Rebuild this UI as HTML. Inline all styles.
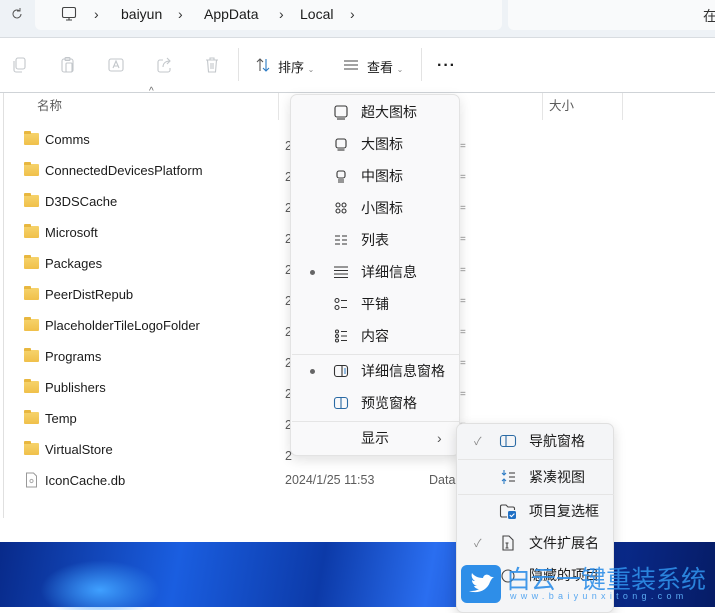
<!DOCTYPE html>
<html><head><meta charset="utf-8"><style>
*{margin:0;padding:0;box-sizing:border-box}
body{width:715px;height:607px;overflow:hidden;position:relative;font-family:"Liberation Sans","Noto Sans CJK SC",sans-serif;font-size:13px;color:#1b1b1b;background:#fff}
.abs{position:absolute}
.top{left:0;top:0;width:715px;height:38px;background:#eef2f6;border-bottom:1px solid #d8dce0}
.addr{left:35px;top:0;width:467px;height:30px;background:#f9fafb;border-radius:0 0 6px 6px}
.addr2{left:508px;top:0;width:220px;height:30px;background:#f9fafb;border-radius:0 0 6px 6px}
.tb{left:0;top:38px;width:715px;height:55px;background:#fff;border-bottom:1px solid #cfd3d7}
.hdr{top:93px;height:27px;font-size:12.5px;color:#5c5c5c}
.row{left:24px;height:20px;font-size:13px;color:#1b1b1b;display:flex;align-items:center}
.fold{width:15px;height:12px;background:linear-gradient(#f6d36b,#f0c04a);border-radius:1px;margin-right:6px;position:relative;top:0}
.fold:before{content:"";position:absolute;left:0;top:-2px;width:7px;height:3px;background:#e8b73f;border-radius:1px 1px 0 0}
.menu{left:290px;top:94px;width:170px;height:362px;background:#f9f9fa;border:1px solid #e3e3e3;border-radius:7px;box-shadow:0 4px 12px rgba(0,0,0,.12)}
.mi{position:absolute;left:0;width:170px;height:30px;display:flex;align-items:center;font-size:14px}
.mi svg{position:absolute;left:42px}
.mi span{position:absolute;left:70px}
.dot{position:absolute;left:19px;width:5px;height:5px;border-radius:50%;background:#666}
.sep{position:absolute;left:1px;width:168px;height:1px;background:#e5e5e5}
.sub{left:456px;top:423px;width:158px;height:190px;background:#f4f5f7;border:1px solid #e0e0e0;border-radius:7px;box-shadow:0 4px 12px rgba(0,0,0,.15)}
.si{position:absolute;left:0;width:158px;height:28px;display:flex;align-items:center;font-size:14px}
.si span{position:absolute;left:72px}
.si svg{position:absolute;left:42px}
.chk{position:absolute;left:17px;color:#888;font-size:11px}
</style></head><body>
<div class="abs top"></div>
<div class="abs addr"></div>
<div class="abs addr2"></div>
<svg class="abs" style="left:10px;top:7px" width="14" height="14" viewBox="0 0 14 14"><path d="M11 7a4 4 0 1 1-1.3-3" fill="none" stroke="#555" stroke-width="1"/><path d="M10 1v3H7" fill="none" stroke="#555" stroke-width="1"/></svg>
<svg class="abs" style="left:61px;top:6px" width="16" height="16" viewBox="0 0 16 16"><rect x="1.5" y="1.5" width="13" height="10" rx="1.5" fill="none" stroke="#444" stroke-width="1.1"/><path d="M5 14h6M8 11.5v2.5" stroke="#444" stroke-width="1.1"/></svg>
<div class="abs" style="left:94px;top:6px;font-size:14px;color:#333">›</div>
<div class="abs" style="left:121px;top:6px;font-size:14px;color:#1b1b1b">baiyun</div>
<div class="abs" style="left:178px;top:6px;font-size:14px;color:#333">›</div>
<div class="abs" style="left:204px;top:6px;font-size:14px;color:#1b1b1b">AppData</div>
<div class="abs" style="left:279px;top:6px;font-size:14px;color:#333">›</div>
<div class="abs" style="left:300px;top:6px;font-size:14px;color:#1b1b1b">Local</div>
<div class="abs" style="left:350px;top:6px;font-size:14px;color:#333">›</div>
<div class="abs" style="left:703px;top:6px;font-size:14px;color:#333">在</div>

<div class="abs tb"></div>
<svg class="abs" style="left:10px;top:56px" width="18" height="18" viewBox="0 0 18 18" fill="none" stroke="#c3c7cb" stroke-width="1.1"><rect x="6" y="2" width="9" height="11" rx="2"/><path d="M4 5v9a2 2 0 0 0 2 2h6"/></svg>
<svg class="abs" style="left:59px;top:56px" width="18" height="18" viewBox="0 0 18 18" fill="none" stroke="#c3c7cb" stroke-width="1.1"><rect x="3" y="3" width="11" height="13" rx="2"/><rect x="6" y="1.5" width="5" height="3" rx="1"/><rect x="7" y="7" width="6" height="9" rx="1"/></svg>
<svg class="abs" style="left:107px;top:56px" width="18" height="18" viewBox="0 0 18 18" fill="none" stroke="#c3c7cb" stroke-width="1.1"><rect x="2" y="3" width="14" height="12" rx="2"/><path d="M6 12l3-7 3 7M7 10h4"/></svg>
<svg class="abs" style="left:156px;top:56px" width="18" height="18" viewBox="0 0 18 18" fill="none" stroke="#c3c7cb" stroke-width="1.1"><path d="M7 4H4a2 2 0 0 0-2 2v8a2 2 0 0 0 2 2h8a2 2 0 0 0 2-2v-2"/><path d="M7 11c0-4 3-6 7-6M11 2l3 3-3 3"/></svg>
<svg class="abs" style="left:203px;top:56px" width="18" height="18" viewBox="0 0 18 18" fill="none" stroke="#c3c7cb" stroke-width="1.1"><path d="M3 4h12M7 4V2h4v2M4.5 4l1 12h7l1-12M8 7v6M10 7v6"/></svg>
<div class="abs" style="left:238px;top:48px;width:1px;height:33px;background:#e3e3e3"></div>
<svg class="abs" style="left:255px;top:57px" width="16" height="16" viewBox="0 0 16 16" fill="none" stroke-width="1.1"><path d="M5 14V2M2 5l3-3 3 3" stroke="#555"/><path d="M11 2v12M8 11l3 3 3-3" stroke="#2a7ac4"/></svg>
<div class="abs" style="left:278px;top:57px;font-size:13px">排序 <span style="font-size:8px;color:#888">⌄</span></div>
<svg class="abs" style="left:343px;top:58px" width="16" height="14" viewBox="0 0 16 14" stroke="#444" stroke-width="1.1"><path d="M1 3h14M1 7h14M1 11h14"/></svg>
<div class="abs" style="left:367px;top:57px;font-size:13px">查看 <span style="font-size:8px;color:#888">⌄</span></div>
<div class="abs" style="left:421px;top:48px;width:1px;height:33px;background:#e3e3e3"></div>
<div class="abs" style="left:437px;top:57px;font-size:16px;letter-spacing:1px;font-weight:bold">···</div>

<div class="abs" style="left:3px;top:93px;width:1px;height:425px;background:#e0e0e0"></div>
<div class="abs hdr" style="left:37px;line-height:27px">名称</div>
<div class="abs" style="left:149px;top:86px;font-size:10px;color:#666">^</div>
<div class="abs" style="left:278px;top:93px;width:1px;height:27px;background:#e5e5e5"></div>
<div class="abs" style="left:542px;top:93px;width:1px;height:27px;background:#e5e5e5"></div>
<div class="abs" style="left:622px;top:93px;width:1px;height:27px;background:#e5e5e5"></div>
<div class="abs hdr" style="left:549px;line-height:27px">大小</div>

<div class="abs row" style="top:129px"><div class="fold"></div>Comms</div>
<div class="abs row" style="top:160px"><div class="fold"></div>ConnectedDevicesPlatform</div>
<div class="abs row" style="top:191px"><div class="fold"></div>D3DSCache</div>
<div class="abs row" style="top:222px"><div class="fold"></div>Microsoft</div>
<div class="abs row" style="top:253px"><div class="fold"></div>Packages</div>
<div class="abs row" style="top:284px"><div class="fold"></div>PeerDistRepub</div>
<div class="abs row" style="top:315px"><div class="fold"></div>PlaceholderTileLogoFolder</div>
<div class="abs row" style="top:346px"><div class="fold"></div>Programs</div>
<div class="abs row" style="top:377px"><div class="fold"></div>Publishers</div>
<div class="abs row" style="top:408px"><div class="fold"></div>Temp</div>
<div class="abs row" style="top:439px"><div class="fold"></div>VirtualStore</div>
<div class="abs row" style="top:470px"><svg width="15" height="16" viewBox="0 0 15 16" style="margin-right:6px"><path d="M2.5 1h7l3 3v11h-10z" fill="#fff" stroke="#999"/><circle cx="7.5" cy="9" r="1.6" fill="none" stroke="#aaa"/></svg>IconCache.db</div>
<div class="abs" style="left:285px;top:473px;font-size:12.5px;color:#5c5c5c">2024/1/25 11:53</div>
<div class="abs" style="left:429px;top:473px;font-size:12.5px;color:#5c5c5c">Data</div>
<div class="abs" style="left:285px;top:131px;font-size:12.5px;color:#5c5c5c;line-height:31px">2<br>2<br>2<br>2<br>2<br>2<br>2<br>2<br>2<br>2<br>2</div>
<div class="abs" style="left:460px;top:131px;font-size:10px;color:#888;line-height:31px">=<br>=<br>=<br>=<br>=<br>=<br>=<br>=<br>=<br>=</div>

<div class="abs" style="left:0;top:542px;width:715px;height:65px;background:linear-gradient(100deg,#082a8a 0%,#1a5ee0 25%,#0c3aa8 45%,#2a6ef0 60%,#0a2e96 80%,#061c66 100%)"></div>
<div class="abs" style="left:40px;top:560px;width:120px;height:50px;background:radial-gradient(ellipse at 50% 60%,#3fa0ff,transparent 70%)"></div>

<div class="abs menu">
<div class="mi" style="top:2px"><svg width="16" height="16" viewBox="0 0 16 16" fill="none" stroke="#333" stroke-width="1.1"><rect x="2" y="2" width="12" height="11" rx="2"/><path d="M4 15h8"/></svg><span>超大图标</span></div>
<div class="mi" style="top:34px"><svg width="16" height="16" viewBox="0 0 16 16" fill="none" stroke="#333" stroke-width="1.1"><rect x="3" y="3" width="10" height="9" rx="2"/><path d="M4.5 14h7"/></svg><span>大图标</span></div>
<div class="mi" style="top:66px"><svg width="16" height="16" viewBox="0 0 16 16" fill="none" stroke="#333" stroke-width="1.1"><rect x="4" y="3" width="8" height="7" rx="2"/><path d="M5 12h6M5 14h6"/></svg><span>中图标</span></div>
<div class="mi" style="top:98px"><svg width="16" height="16" viewBox="0 0 16 16" fill="none" stroke="#333" stroke-width="1.1"><circle cx="5" cy="5" r="2"/><circle cx="11" cy="5" r="2"/><circle cx="5" cy="11" r="2"/><circle cx="11" cy="11" r="2"/></svg><span>小图标</span></div>
<div class="mi" style="top:130px"><svg width="16" height="16" viewBox="0 0 16 16" fill="none" stroke="#333" stroke-width="1.1"><path d="M2 4h5M2 8h5M2 12h5M9 4h5M9 8h5M9 12h5"/></svg><span>列表</span></div>
<div class="mi" style="top:162px"><div class="dot"></div><svg width="16" height="16" viewBox="0 0 16 16" fill="none" stroke="#333" stroke-width="1.1"><path d="M1 3h14M1 6.5h14M1 10h14M1 13.5h14"/></svg><span>详细信息</span></div>
<div class="mi" style="top:194px"><svg width="16" height="16" viewBox="0 0 16 16" fill="none" stroke="#333" stroke-width="1.1"><circle cx="4" cy="4.5" r="2"/><circle cx="4" cy="11.5" r="2"/><path d="M8 4.5h6M8 11.5h6"/></svg><span>平铺</span></div>
<div class="mi" style="top:226px"><svg width="16" height="16" viewBox="0 0 16 16" fill="none" stroke="#333" stroke-width="1.1"><circle cx="4" cy="3.5" r="1.5"/><circle cx="4" cy="8" r="1.5"/><circle cx="4" cy="12.5" r="1.5"/><path d="M8 3.5h6M8 8h6M8 12.5h6"/></svg><span>内容</span></div>
<div class="sep" style="top:259px"></div>
<div class="mi" style="top:261px"><div class="dot"></div><svg width="16" height="16" viewBox="0 0 16 16" fill="none" stroke-width="1.1"><rect x="1.5" y="2.5" width="13" height="11" rx="2.5" stroke="#333"/><path d="M9 3v10" stroke="#333"/><path d="M11 6h2M11 8h2M11 10h2" stroke="#2a7ac4"/></svg><span>详细信息窗格</span></div>
<div class="mi" style="top:293px"><svg width="16" height="16" viewBox="0 0 16 16" fill="none" stroke-width="1.1"><rect x="1.5" y="2.5" width="13" height="11" rx="2.5" stroke="#2a6aa4"/><path d="M8 3v10" stroke="#2a6aa4"/></svg><span>预览窗格</span></div>
<div class="sep" style="top:326px"></div>
<div class="mi" style="top:328px"><span>显示</span><div style="position:absolute;left:146px;color:#555">›</div></div>
</div>

<div class="abs sub">
<div class="si" style="top:3px"><div class="chk">✓</div><svg width="18" height="16" viewBox="0 0 18 16" fill="none" stroke-width="1.1"><rect x="1.5" y="2.5" width="15" height="11" rx="2.5" stroke="#2a6aa4"/><path d="M7 3v10" stroke="#2a6aa4"/></svg><span>导航窗格</span></div>
<div class="sep" style="top:35px;width:156px"></div>
<div class="si" style="top:39px"><svg width="18" height="16" viewBox="0 0 18 16" fill="none" stroke-width="1.1"><path d="M5 1v5M3 4l2 2 2-2M5 15v-5M3 12l2-2 2 2" stroke="#2a7ac4"/><path d="M10 4h6M10 8h6M10 12h6" stroke="#333"/></svg><span>紧凑视图</span></div>
<div class="sep" style="top:70px;width:156px"></div>
<div class="si" style="top:73px"><svg width="18" height="16" viewBox="0 0 18 16" fill="none" stroke-width="1.1"><path d="M8 14H3a1.5 1.5 0 0 1-1.5-1.5v-9A1.5 1.5 0 0 1 3 2h4l2 2h5a1.5 1.5 0 0 1 1.5 1.5V7" stroke="#444"/><rect x="9" y="8" width="8" height="8" rx="1.5" fill="#1f6fc4"/><path d="M10.8 12l1.6 1.6 3-3" stroke="#fff"/></svg><span>项目复选框</span></div>
<div class="si" style="top:105px"><div class="chk">✓</div><svg width="18" height="16" viewBox="0 0 18 16" fill="none" stroke="#444" stroke-width="1.1"><path d="M4 1h6l4 4v10H4z"/><path d="M6.5 8h3M8 8v5M6.5 13h3"/></svg><span>文件扩展名</span></div>
<div class="si" style="top:137px"><svg width="18" height="16" viewBox="0 0 18 16" fill="none" stroke="#444" stroke-width="1.1"><circle cx="9" cy="9" r="6"/></svg><span>隐藏的项目</span></div>
</div>

<svg class="abs" style="left:461px;top:565px" width="40" height="38" viewBox="0 0 40 38"><rect x="0" y="0" width="40" height="38" rx="6" fill="#2e8ee8"/><path d="M8 26c8 3 18 0 21-9 1-2 2-4 4-5-2 0-3 0-4-1-2-2-6-2-7 2-5 0-9-2-11-5-1 3 0 6 3 8-1 0-2 0-3-1 0 3 2 5 5 6-1 0-2 0-3 0 1 2 3 3 5 3-3 2-6 2-10 2z" fill="#fff"/></svg>
<div class="abs" style="left:506px;top:560px;font-size:25px;color:#2e8ee8;letter-spacing:0px;white-space:nowrap;opacity:.9">白云一键重装系统</div>
<div class="abs" style="left:510px;top:591px;font-size:9px;color:#5aa8f0;letter-spacing:4.3px;white-space:nowrap">www.baiyunxitong.com</div>
</body></html>
